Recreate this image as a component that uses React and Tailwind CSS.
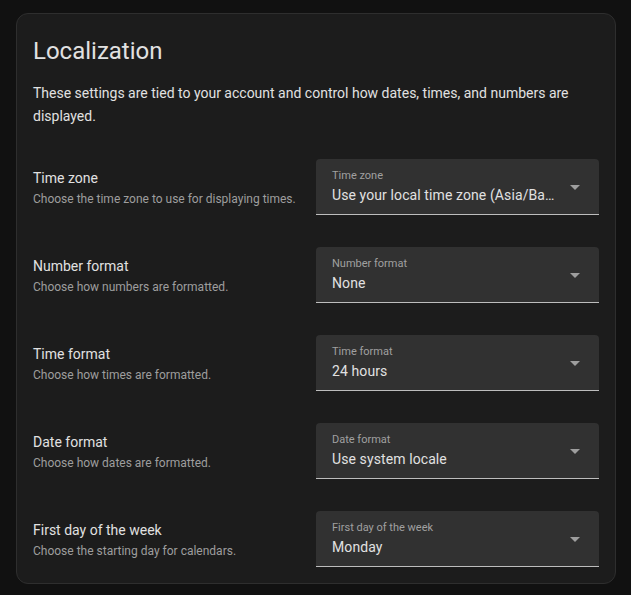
const rows = [
  { title: 'Time zone', sub: 'Choose the time zone to use for displaying times.', label: 'Time zone', value: 'Use your local time zone (Asia/Bangkok)' },
  { title: 'Number format', sub: 'Choose how numbers are formatted.', label: 'Number format', value: 'None' },
  { title: 'Time format', sub: 'Choose how times are formatted.', label: 'Time format', value: '24 hours' },
  { title: 'Date format', sub: 'Choose how dates are formatted.', label: 'Date format', value: 'Use system locale' },
  { title: 'First day of the week', sub: 'Choose the starting day for calendars.', label: 'First day of the week', value: 'Monday' },
];

const Select = ({ label, value }) => (
  <div className="relative w-[283px] h-14 shrink-0 bg-[#313131] rounded-t border-b border-[#bdbdbd] pl-4 pr-[42px]">
    <div className="pt-[10px] text-[11px] leading-[14px] text-[#a0a0a0]">{label}</div>
    <div className="text-[14px] leading-6 tracking-[0.1px] text-[#e1e1e1] truncate">{value}</div>
    <svg className="absolute right-[19px] top-[26px]" width="10" height="5" viewBox="0 0 10 5">
      <path d="M0 0 L10 0 L5 5 Z" fill="#9e9e9e" />
    </svg>
  </div>
);

export default function App() {
  return (
    <div className="min-h-[595px] bg-[#111111] pt-[13px] pl-4 pr-[15px]" style={{ fontFamily: 'Roboto, "Noto Sans", sans-serif' }}>
      <div className="bg-[#1c1c1c] border border-[#2e2e2e] rounded-xl px-4">
        <h1 className="pt-[21px] text-[24px] leading-8 text-[#e1e1e1] font-normal">Localization</h1>
        <p className="mt-[15px] pb-[15px] text-[14px] leading-[23px] text-[#e1e1e1]">
          These settings are tied to your account and control how dates, times, and numbers are displayed.
        </p>
        {rows.map((row) => (
          <div key={row.title} className="flex items-start justify-between py-4">
            <div className="pt-[7px]">
              <div className="text-[14px] leading-6 text-[#e1e1e1]">{row.title}</div>
              <div className="text-[12px] leading-[18px] text-[#9e9e9e]">{row.sub}</div>
            </div>
            <Select label={row.label} value={row.value} />
          </div>
        ))}
      </div>
    </div>
  );
}
